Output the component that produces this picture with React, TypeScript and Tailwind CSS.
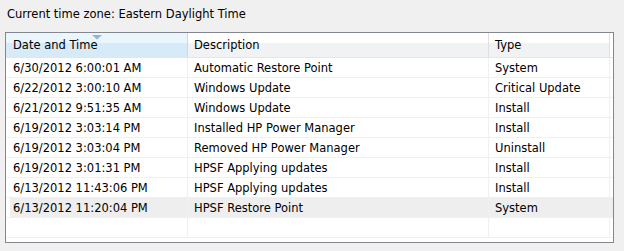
import React from 'react';

type Row = { date: string; desc: string; type: string };

const rows: Row[] = [
  { date: '6/30/2012 6:00:01 AM', desc: 'Automatic Restore Point', type: 'System' },
  { date: '6/22/2012 3:00:10 AM', desc: 'Windows Update', type: 'Critical Update' },
  { date: '6/21/2012 9:51:35 AM', desc: 'Windows Update', type: 'Install' },
  { date: '6/19/2012 3:03:14 PM', desc: 'Installed HP Power Manager', type: 'Install' },
  { date: '6/19/2012 3:03:04 PM', desc: 'Removed HP Power Manager', type: 'Uninstall' },
  { date: '6/19/2012 3:01:31 PM', desc: 'HPSF Applying updates', type: 'Install' },
  { date: '6/13/2012 11:43:06 PM', desc: 'HPSF Applying updates', type: 'Install' },
  { date: '6/13/2012 11:20:04 PM', desc: 'HPSF Restore Point', type: 'System' },
];

const App: React.FC = () => {
  return (
    <div
      className="w-[624px] h-[251px] bg-[#f0f0f0] text-[11.5px] text-black overflow-hidden"
      style={{ fontFamily: '"DejaVu Sans", Verdana, sans-serif' }}
    >
      <div className="h-[32px] pl-[7px] pt-[6px] leading-[16px]">Current time zone: Eastern Daylight Time</div>

      <div className="ml-[5px] w-[609px] h-[211px] border border-[#828790] bg-white flex flex-col">
        {/* Header */}
        <div className="flex h-[25px] border-b border-[#e5e5e5]">
          <div className="relative w-[182px] h-full flex items-center pt-[2px] pl-[7px] bg-gradient-to-b from-[#eaf5fc] from-40% to-[#d6eaf8] to-40% border-r border-[#c0dcf3]">
            <svg className="absolute left-[86px] top-[2px]" width="10" height="5" viewBox="0 0 10 5">
              <path d="M0 0 H10 L5 4.5 Z" fill="#8fb8d8" />
            </svg>
            Date and Time
          </div>
          <div className="w-[301px] h-full flex items-center pt-[2px] pl-[6px] bg-gradient-to-b from-white from-40% to-[#f1f2f4] to-40% border-r border-[#e0e0e0]">
            Description
          </div>
          <div className="w-[121px] h-full flex items-center pt-[2px] pl-[6px] bg-gradient-to-b from-white from-40% to-[#f1f2f4] to-40% border-r border-[#e0e0e0]">
            Type
          </div>
        </div>

        {/* Rows */}
        {rows.map((r, i) => (
          <div
            key={i}
            className={`flex h-[20px] border-b border-[#f0f0f0] ${i === rows.length - 1 ? 'bg-[linear-gradient(to_right,white_4px,#eeeeee_4px)]' : ''}`}
          >
            <div className="w-[182px] flex items-center pt-[2px] pl-[7px] border-r border-[#f0f0f0] whitespace-nowrap">{r.date}</div>
            <div className="w-[301px] flex items-center pt-[2px] pl-[6px] border-r border-[#f0f0f0] whitespace-nowrap">{r.desc}</div>
            <div className="w-[121px] flex items-center pt-[2px] pl-[6px] border-r border-[#f0f0f0] whitespace-nowrap">{r.type}</div>
          </div>
        ))}
        <div className="flex h-[20px] border-b border-[#f0f0f0]">
          <div className="w-[182px] border-r border-[#f0f0f0]" />
          <div className="w-[301px] border-r border-[#f0f0f0]" />
          <div className="w-[121px] border-r border-[#f0f0f0]" />
        </div>
      </div>
    </div>
  );
};

export default App;
